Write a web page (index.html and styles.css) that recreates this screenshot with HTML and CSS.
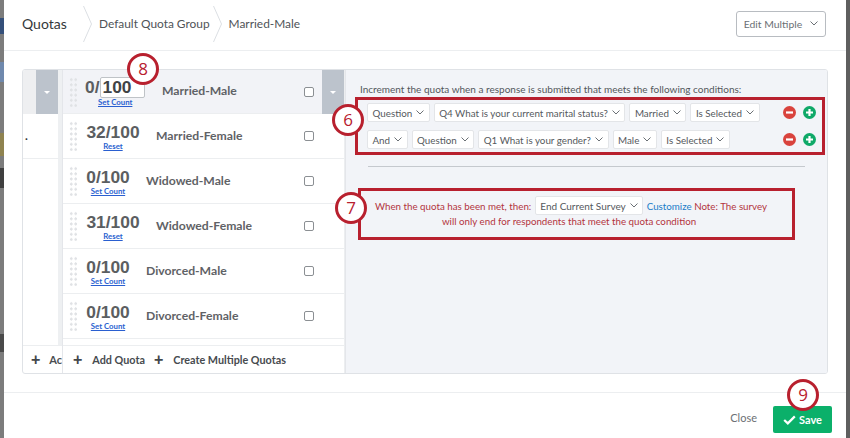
FILE: index.html
```html
<!DOCTYPE html>
<html lang="en">
<head>
<meta charset="utf-8">
<title>Quotas</title>
<link rel="stylesheet" href="styles.css">
</head>
<body>
<div class="page">
  <div class="backdrop"><i class="b1"></i><i class="b2"></i><i class="b3"></i><i class="b4"></i><i class="b5"></i></div>
  <main class="modal">
    <header class="head">
      <div class="crumb first">Quotas</div>
      <svg class="sep" width="9" height="36" viewBox="0 0 9 36"><path d="M.5 0 8.5 18 .5 36" fill="none" stroke="#dcdfe3"/></svg>
      <div class="crumb">Default Quota Group</div>
      <svg class="sep" width="9" height="36" viewBox="0 0 9 36"><path d="M.5 0 8.5 18 .5 36" fill="none" stroke="#dcdfe3"/></svg>
      <div class="crumb">Married-Male</div>
      <button class="edit">Edit Multiple <svg class="chev" width="8" height="5" viewBox="0 0 8 5"><path d="M.5.5 4 4 7.5.5" fill="none" stroke="#6b7075"/></svg></button>
    </header>
    <section class="panel">
      <div class="groups">
        <div class="groups-top"><span class="gap-cell"></span><span class="tab"><i class="tri"></i></span></div>
        <div class="dot-cell"><span class="dot">.</span></div>
        <div class="empty-cell"></div>
        <div class="add-cell"><span class="plus">+</span><span class="add-clip">Ac</span></div>
      </div>
      <div class="list">
        <div class="row active">
          <i class="grip"></i>
          <div class="count c-active"><div class="num num-edit">0/<span class="input">100</span></div><a class="link">Set Count</a></div>
          <div class="name n-a">Married-Male</div>
          <i class="check"></i>
          <span class="tab rowtab"><i class="tri"></i></span>
        </div>
        <div class="row">
          <i class="grip"></i>
          <div class="count wide"><div class="num">32/100</div><a class="link">Reset</a></div>
          <div class="name n-w">Married-Female</div>
          <i class="check"></i>
        </div>
        <div class="row">
          <i class="grip"></i>
          <div class="count"><div class="num">0/100</div><a class="link">Set Count</a></div>
          <div class="name">Widowed-Male</div>
          <i class="check"></i>
        </div>
        <div class="row">
          <i class="grip"></i>
          <div class="count wide"><div class="num">31/100</div><a class="link">Reset</a></div>
          <div class="name n-w">Widowed-Female</div>
          <i class="check"></i>
        </div>
        <div class="row">
          <i class="grip"></i>
          <div class="count"><div class="num">0/100</div><a class="link">Set Count</a></div>
          <div class="name">Divorced-Male</div>
          <i class="check"></i>
        </div>
        <div class="row">
          <i class="grip"></i>
          <div class="count"><div class="num">0/100</div><a class="link">Set Count</a></div>
          <div class="name">Divorced-Female</div>
          <i class="check"></i>
        </div>
        <div class="list-fill"></div>
        <div class="list-foot">
          <span class="plus">+</span><span class="foot-label">Add Quota</span>
          <span class="plus p2">+</span><span class="foot-label">Create Multiple Quotas</span>
        </div>
      </div>
      <div class="detail">
        <p class="lead">Increment the quota when a response is submitted that meets the following conditions:</p>
        <div class="cond">
          <span class="sel">Question<svg class="chev" width="8" height="5" viewBox="0 0 8 5"><path d="M.5.5 4 4 7.5.5" fill="none" stroke="#6b7075"/></svg></span>
          <span class="sel">Q4 What is your current marital status?<svg class="chev" width="8" height="5" viewBox="0 0 8 5"><path d="M.5.5 4 4 7.5.5" fill="none" stroke="#6b7075"/></svg></span>
          <span class="sel">Married<svg class="chev" width="8" height="5" viewBox="0 0 8 5"><path d="M.5.5 4 4 7.5.5" fill="none" stroke="#6b7075"/></svg></span>
          <span class="sel">Is Selected<svg class="chev" width="8" height="5" viewBox="0 0 8 5"><path d="M.5.5 4 4 7.5.5" fill="none" stroke="#6b7075"/></svg></span>
          <span class="acts">
            <svg width="13" height="13" viewBox="0 0 13 13"><circle cx="6.5" cy="6.5" r="6.5" fill="#d9433d"/><rect x="3" y="5.4" width="7" height="2.2" fill="#fff"/></svg>
            <svg width="13" height="13" viewBox="0 0 13 13"><circle cx="6.5" cy="6.5" r="6.5" fill="#0fa968"/><path d="M3 5.4h2.4V3h2.2v2.4H10v2.2H7.6V10H5.4V7.6H3z" fill="#fff"/></svg>
          </span>
        </div>
        <div class="cond second">
          <span class="sel">And<svg class="chev" width="8" height="5" viewBox="0 0 8 5"><path d="M.5.5 4 4 7.5.5" fill="none" stroke="#6b7075"/></svg></span>
          <span class="sel">Question<svg class="chev" width="8" height="5" viewBox="0 0 8 5"><path d="M.5.5 4 4 7.5.5" fill="none" stroke="#6b7075"/></svg></span>
          <span class="sel">Q1 What is your gender?<svg class="chev" width="8" height="5" viewBox="0 0 8 5"><path d="M.5.5 4 4 7.5.5" fill="none" stroke="#6b7075"/></svg></span>
          <span class="sel">Male<svg class="chev" width="8" height="5" viewBox="0 0 8 5"><path d="M.5.5 4 4 7.5.5" fill="none" stroke="#6b7075"/></svg></span>
          <span class="sel">Is Selected<svg class="chev" width="8" height="5" viewBox="0 0 8 5"><path d="M.5.5 4 4 7.5.5" fill="none" stroke="#6b7075"/></svg></span>
          <span class="acts">
            <svg width="13" height="13" viewBox="0 0 13 13"><circle cx="6.5" cy="6.5" r="6.5" fill="#d9433d"/><rect x="3" y="5.4" width="7" height="2.2" fill="#fff"/></svg>
            <svg width="13" height="13" viewBox="0 0 13 13"><circle cx="6.5" cy="6.5" r="6.5" fill="#0fa968"/><path d="M3 5.4h2.4V3h2.2v2.4H10v2.2H7.6V10H5.4V7.6H3z" fill="#fff"/></svg>
          </span>
        </div>
        <hr class="rule">
        <div class="met">
          <div class="met-line">When the quota has been met, then: <span class="sel">End Current Survey<svg class="chev" width="8" height="5" viewBox="0 0 8 5"><path d="M.5.5 4 4 7.5.5" fill="none" stroke="#6b7075"/></svg></span> <a class="cust">Customize</a> Note: The survey</div>
          <div class="met-line two">will only end for respondents that meet the quota condition</div>
        </div>
      </div>
    </section>
    <footer class="foot">
      <span class="close">Close</span>
      <button class="save"><svg width="13" height="10" viewBox="0 0 13 10"><path d="M1.2 5 4.8 8.4 11.8 1.4" fill="none" stroke="#fff" stroke-width="2.2"/></svg>Save</button>
    </footer>
  </main>
  <div class="box box6"></div>
  <div class="box box7"></div>
  <div class="badge b6">6</div>
  <div class="badge b7">7</div>
  <div class="badge b8">8</div>
  <div class="badge b9">9</div>
</div>
</body>
</html>
```
FILE: styles.css
```css
* { box-sizing: border-box; }
html, body { margin: 0; padding: 0; }
body { width: 850px; height: 438px; overflow: hidden; font-family: Lato, "Open Sans", sans-serif; background: #555; }
.page { position: relative; width: 850px; height: 438px; display: flex; padding: 0 4px; background: #5f5f5f; overflow: hidden; }
.backdrop { position: absolute; left: 0; top: 0; width: 4px; height: 438px; background: #7c7c7c; }
.backdrop i { position: absolute; left: 0; width: 4px; display: block; }
.b1 { top: 18px; height: 16px; background: #35507a; }
.b2 { top: 62px; height: 20px; background: #6f89ad; }
.b3 { top: 133px; height: 23px; background: #8f8350; }
.b4 { top: 168px; height: 20px; background: #3f3f3f; }
.b5 { top: 334px; height: 18px; background: #4a4a4a; }
.modal { width: 842px; height: 438px; background: #fff; display: flex; flex-direction: column; }
.head { height: 51px; flex: none; display: flex; align-items: center; padding: 0 20px 3px 18px; border-bottom: 1px solid #eceef0; }
.crumb { font-size: 11.9px; color: #4f5357; white-space: nowrap; }
.crumb.first { font-size: 14px; color: #33373a; width: 61px; }
.sep { flex: none; margin-right: 7px; }
.crumb:not(.first) { margin-right: 3px; }
.edit { margin-left: auto; height: 26px; width: 90px; border: 1px solid #b8bcc1; border-radius: 3px; background: #fff; color: #6b7075; font: 10.4px Lato, sans-serif; padding: 0; display: flex; align-items: center; justify-content: center; gap: 8px; white-space: nowrap; }
.chev { flex: none; }
.panel { margin: 18px 18px 0; height: 305px; flex: none; display: flex; border: 1px solid #dfe2e6; border-radius: 3px; background: #fff; overflow: hidden; }
.groups { width: 39px; flex: none; display: flex; flex-direction: column; }
.groups-top { height: 44px; display: flex; flex: none; border-right: 4px solid #eef0f2; }
.gap-cell { width: 13px; background: #eeeff1; }
.tab { width: 22px; height: 44px; background: #bcc3cc; display: flex; align-items: center; justify-content: center; flex: none; }
.tri { width: 0; height: 0; border-left: 3.5px solid transparent; border-right: 3.5px solid transparent; border-top: 3.5px solid #fff; display: block; }
.dot-cell { height: 45px; border-bottom: 1px solid #eceef0; border-right: 4px solid #eef0f2; font-size: 12px; color: #333; padding: 14px 0 0 2px; flex: none; }
.dot { font-weight: 700; }
.empty-cell { flex: 1; border-right: 4px solid #eef0f2; }
.add-cell { height: 28px; border-top: 1px solid #eceef0; flex: none; display: flex; align-items: center; white-space: nowrap; overflow: hidden; padding-left: 8px; font-size: 11px; font-weight: 700; color: #4a4e52; }
.add-clip { margin-left: 9px; }
.plus { font-size: 16px; font-weight: 700; line-height: 14px; color: #43474b; font-family: "Liberation Sans", sans-serif; }
.list { width: 283px; flex: none; display: flex; flex-direction: column; border-right: 1px solid #eceef0; border-left: 1px solid #e4e6ea; }
.row { height: 45px; flex: none; display: flex; align-items: center; position: relative; border-bottom: 1px solid #eceef0; padding-left: 6px; }
.row.active { background: #f2f3f7; height: 44px; }
.grip { width: 8px; height: 30px; flex: none; background-image: radial-gradient(circle, #e0e2e5 1.3px, transparent 1.5px); background-size: 4.5px 5.2px; }
.count { width: 46px; margin-left: 8px; display: flex; flex-direction: column; align-items: center; flex: none; }
.count.wide { width: 56px; margin-left: 8px; }
.count.c-active { width: 61px; margin-left: 8px; align-items: flex-start; }
.num { font-family: "Liberation Sans", sans-serif; font-size: 17.4px; font-weight: 700; color: #5b5e61; line-height: 20px; white-space: nowrap; }
.num-edit { display: flex; align-items: center; }
.input { width: 45px; height: 21px; border: 1px solid #bfc3c7; border-radius: 2px; background: #fff; color: #404346; padding-left: 2px; line-height: 19px; }
.link { font-size: 7.8px; line-height: 9px; color: #2a5fd0; text-decoration: underline; font-weight: 700; }
.c-active .link { margin-left: 13px; }
.name { margin-left: 15px; margin-top: -2px; font-size: 12.2px; font-weight: 700; color: #5f6266; white-space: nowrap; flex: 1; }
.n-a { margin-left: 16px; }
.n-w { margin-left: 15px; }
.check { position: absolute; left: 241px; top: 17px; width: 10px; height: 10px; border: 1px solid #8b8f93; border-radius: 2px; background: #fff; }
.rowtab { position: absolute; left: 259px; top: 0; }
.list-fill { flex: 1; }
.list-foot { height: 28px; flex: none; border-top: 1px solid #eceef0; display: flex; align-items: center; padding-left: 10px; font-size: 10.8px; font-weight: 700; color: #474b4f; white-space: nowrap; }
.foot-label { margin-left: 10px; }
.p2 { margin-left: 9px; }
.detail { flex: 1; background: #f2f4f8; padding: 13px 0 0 14px; min-width: 0; border-left: 1px solid #e4e6ea; }
.lead { margin: 0; font-size: 10px; line-height: 13px; color: #53575b; white-space: nowrap; }
.cond { display: flex; align-items: center; gap: 4px; margin: 7px 0 0 7px; height: 19px; width: 449px; }
.second { margin-top: 8px; }
.sel { display: inline-flex; align-items: center; height: 19px; padding: 0 4.5px; gap: 4px; background: #fff; border: 1px solid #e3e5e8; border-radius: 2px; font-size: 9.8px; color: #55595d; white-space: nowrap; }
.acts { margin-left: auto; display: flex; gap: 7px; }
.rule { margin: 17px 0 0 8px; width: 437px; border: 0; border-top: 1px solid #c5c9ce; }
.met { margin: 29px 0 0 0; width: 422px; text-align: center; color: #b3353d; font-size: 9.75px; }
.met-line { white-space: nowrap; }
.met-line .sel { margin: 0 1px; font-size: 10px; }
.two { margin-top: 0; margin-left: -4px; }
.cust { color: #1a7cc8; }
.foot { flex: 1; margin-top: 18px; border-top: 1px solid #eceef0; display: flex; align-items: flex-start; justify-content: flex-end; padding: 13px 14px 0 0; }
.close { font-size: 11px; color: #6c7074; margin: 5px 16px 0 0; }
.save { width: 59px; height: 27px; border: 0; border-radius: 2px; background: #0bb06a; color: #fff; font: 700 11px Lato, sans-serif; display: flex; align-items: center; justify-content: center; gap: 3px; padding: 0; }
.box { position: absolute; border: 3px solid #b8202e; }
.box6 { left: 355px; top: 97px; width: 470px; height: 58px; }
.box7 { left: 358px; top: 188px; width: 437px; height: 52px; }
.badge { position: absolute; width: 32px; height: 32px; border: 3px solid #b8202e; border-radius: 50%; background: #fff; color: #b8202e; font-size: 17px; line-height: 26px; text-align: center; font-family: "Open Sans", sans-serif; }
.b6 { left: 332px; top: 104px; }
.b7 { left: 335px; top: 192px; }
.b8 { left: 127px; top: 53px; }
.b9 { left: 787px; top: 379px; }
```
